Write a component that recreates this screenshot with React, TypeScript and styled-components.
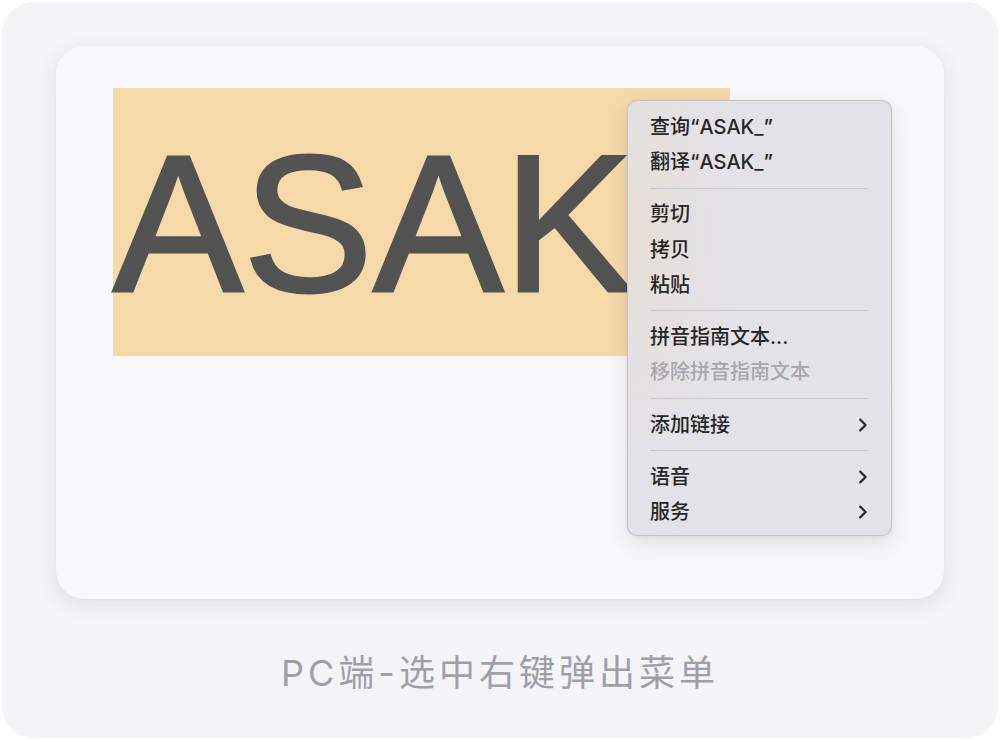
import styled, { createGlobalStyle } from "styled-components"

const GlobalStyle = createGlobalStyle`
    *{
        box-sizing: border-box;
    }
    body{
        margin: 0;
        background: #ffffff;
        font-family: "Inter", "Noto Sans CJK SC", sans-serif;
    }
`

const Frame = styled.div`
    margin: 2px;
    height: 736px;
    border-radius: 32px;
    background: #f4f4f7;
    display: flex;
    flex-direction: column;
    align-items: center;
    padding-top: 44px;
`

const Card = styled.div`
    position: relative;
    width: 888px;
    height: 553px;
    border-radius: 28px;
    background: #f8f8fa;
    box-shadow: 0 6px 22px rgba(60, 60, 80, 0.09), 0 1px 3px rgba(60, 60, 80, 0.04);
    padding: 42px 0 0 57px;
`

// selected word; the trailing "_" runs on under the menu
const Selection = styled.div`
    width: 617px;
    height: 268px;
    padding-top: 3px;
    white-space: nowrap;
    background: #f6d9a9;
    color: #535353;
    font-family: "Liberation Sans", Arial, sans-serif;
    font-size: 195px;
    line-height: 265px;
    -webkit-text-stroke: 3px #535353;
`

const Menu = styled.div`
    position: absolute;
    left: 571px;
    top: 54px;
    width: 265px;
    padding: 8px 0 5px;
    border-radius: 10px;
    border: 1px solid rgba(0, 0, 0, 0.13);
    background:
        radial-gradient(ellipse 110px 230px at 0% 30%, rgba(240, 214, 170, 0.28), transparent),
        #e3e2e8;
    box-shadow: 0 8px 22px rgba(0, 0, 0, 0.1), 0 1px 4px rgba(0, 0, 0, 0.06);
`

const Item = styled.div<{ $disabled?: boolean }>`
    height: 35.3px;
    display: flex;
    align-items: center;
    justify-content: space-between;
    padding: 0 23px 0 22px;
    font-size: 20px;
    font-weight: 500;
    line-height: 24px;
    color: ${props => props.$disabled ? "#a8a7ad" : "#262626"};
`

const Separator = styled.div`
    height: 17px;
    display: flex;
    align-items: center;

    &::after{
        content: "";
        flex: 1;
        height: 1px;
        margin: 0 23px 0 22px;
        background: #c8c7cd;
    }
`

const Chevron = () => (
    <svg width="10" height="14" viewBox="0 0 10 14">
        <path d="M2.2 1.6 L7.6 7 L2.2 12.4" fill="none" stroke="#2a2a2a" strokeWidth="2.2" strokeLinecap="round" strokeLinejoin="round" />
    </svg>
)

const Caption = styled.div`
    margin-top: 56px;
    font-size: 36px;
    line-height: 36px;
    color: #a09fa7;
    letter-spacing: 4px;
`

export default function App(): JSX.Element {
    return (
        <>
            <GlobalStyle />
            <Frame>
                <Card>
                    <Selection>ASAK_</Selection>
                    <Menu>
                        <Item>查询“ASAK_”</Item>
                        <Item>翻译“ASAK_”</Item>
                        <Separator />
                        <Item>剪切</Item>
                        <Item>拷贝</Item>
                        <Item>粘贴</Item>
                        <Separator />
                        <Item>拼音指南文本...</Item>
                        <Item $disabled>移除拼音指南文本</Item>
                        <Separator />
                        <Item>添加链接<Chevron /></Item>
                        <Separator />
                        <Item>语音<Chevron /></Item>
                        <Item>服务<Chevron /></Item>
                    </Menu>
                </Card>
                <Caption>PC端-选中右键弹出菜单</Caption>
            </Frame>
        </>
    )
}
